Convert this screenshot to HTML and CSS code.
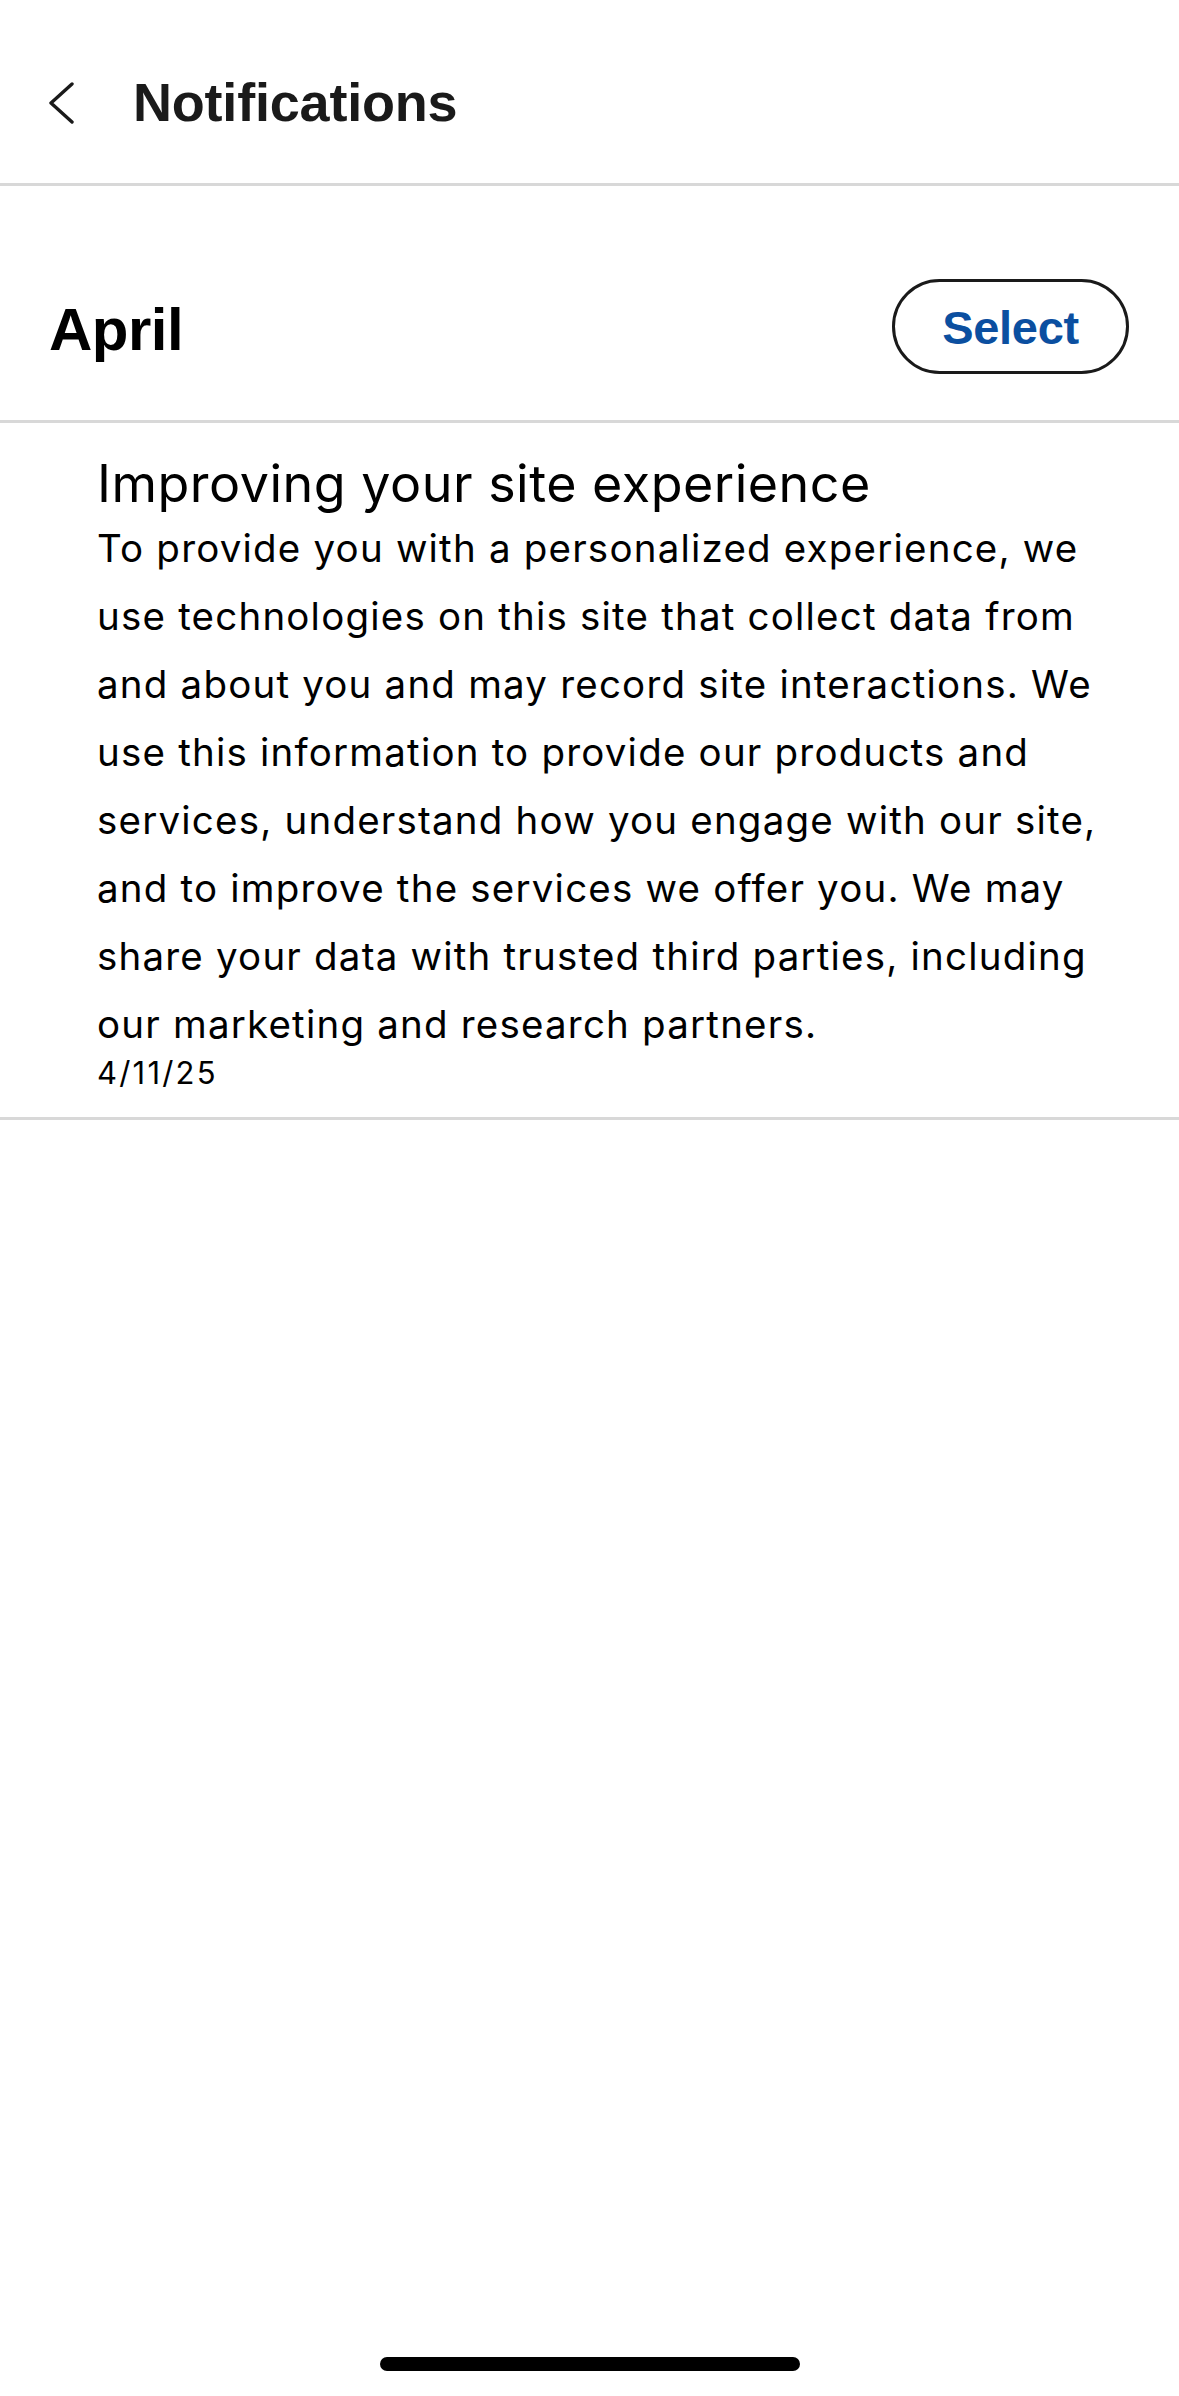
FILE: index.html
```html
<!DOCTYPE html>
<html lang="en">
<head>
<meta charset="utf-8">
<title>Notifications</title>
<link rel="stylesheet" href="styles.css">
</head>
<body>
<div class="screen">
  <header class="topbar">
    <button class="back" aria-label="Back">
      <svg width="28" height="44" viewBox="0 0 28 44" aria-hidden="true">
        <polyline points="24,4 3,23 24,42" fill="none" stroke="#1a1a1a" stroke-width="3.4" stroke-linecap="round" stroke-linejoin="round"/>
      </svg>
    </button>
    <h1 class="title">Notifications</h1>
  </header>

  <section class="month">
    <h2 class="month-name">April</h2>
    <button class="select-btn">Select</button>
  </section>

  <article class="note">
    <h3 class="note-title">Improving your site experience</h3>
    <p class="note-body">To provide you with a personalized experience, we use technologies on this site that collect data from and about you and may record site interactions. We use this information to provide our products and services, understand how you engage with our site, and to improve the services we offer you. We may share your data with trusted third parties, including our marketing and research partners.</p>
    <div class="note-date">4/11/25</div>
  </article>

  <div class="spacer"></div>
  <div class="home-bar"></div>
</div>
</body>
</html>
```

FILE: styles.css
```css
* { box-sizing: border-box; }

html, body {
  margin: 0;
  padding: 0;
  background: #ffffff;
}

body {
  font-family: "Liberation Sans", Arial, "Helvetica Neue", sans-serif;
  color: #000000;
}

.screen {
  width: 1179px;
  height: 2396px;
  display: flex;
  flex-direction: column;
  background: #ffffff;
}

.topbar {
  height: 186px;
  padding: 20px 0 0 47px;
  display: flex;
  align-items: center;
  gap: 56px;
  border-bottom: 3px solid #d8d8d8;
}

.back {
  width: 30px;
  height: 44px;
  padding: 0;
  margin: 0;
  border: 0;
  background: transparent;
  display: flex;
  align-items: center;
  justify-content: center;
}

.title {
  margin: 0;
  font-size: 54px;
  font-weight: 700;
  color: #1a1a1a;
  letter-spacing: -0.2px;
}

.month {
  height: 237px;
  padding: 46px 50px 0 49px;
  display: flex;
  align-items: center;
  justify-content: space-between;
  border-bottom: 3px solid #d8d8d8;
}

.month-name {
  margin: 6px 0 0 0;
  font-size: 60px;
  font-weight: 700;
  color: #000000;
  letter-spacing: -0.5px;
}

.select-btn {
  width: 237px;
  height: 95px;
  border: 3px solid #1a1a1a;
  border-radius: 48px;
  background: #ffffff;
  font-family: inherit;
  font-size: 47px;
  font-weight: 700;
  color: #0b4fa0;
  padding: 2px 0 0 0;
  letter-spacing: -0.3px;
}

.note {
  padding: 31px 77px 29px 97px;
  border-bottom: 3px solid #d8d8d8;
  font-family: Inter, "Liberation Sans", Arial, sans-serif;
}

.note-title {
  margin: 0;
  font-size: 52px;
  line-height: 60px;
  font-weight: 400;
  letter-spacing: 0.5px;
}

.note-body {
  margin: 0;
  font-size: 38.5px;
  line-height: 68px;
  font-weight: 400;
  letter-spacing: 1.2px;
}

.note-date {
  font-size: 31px;
  line-height: 30px;
  letter-spacing: 2.2px;
}

.spacer {
  flex: 1;
}

.home-bar {
  align-self: center;
  width: 420px;
  height: 14px;
  border-radius: 7px;
  background: #000000;
  margin-bottom: 25px;
}
```
